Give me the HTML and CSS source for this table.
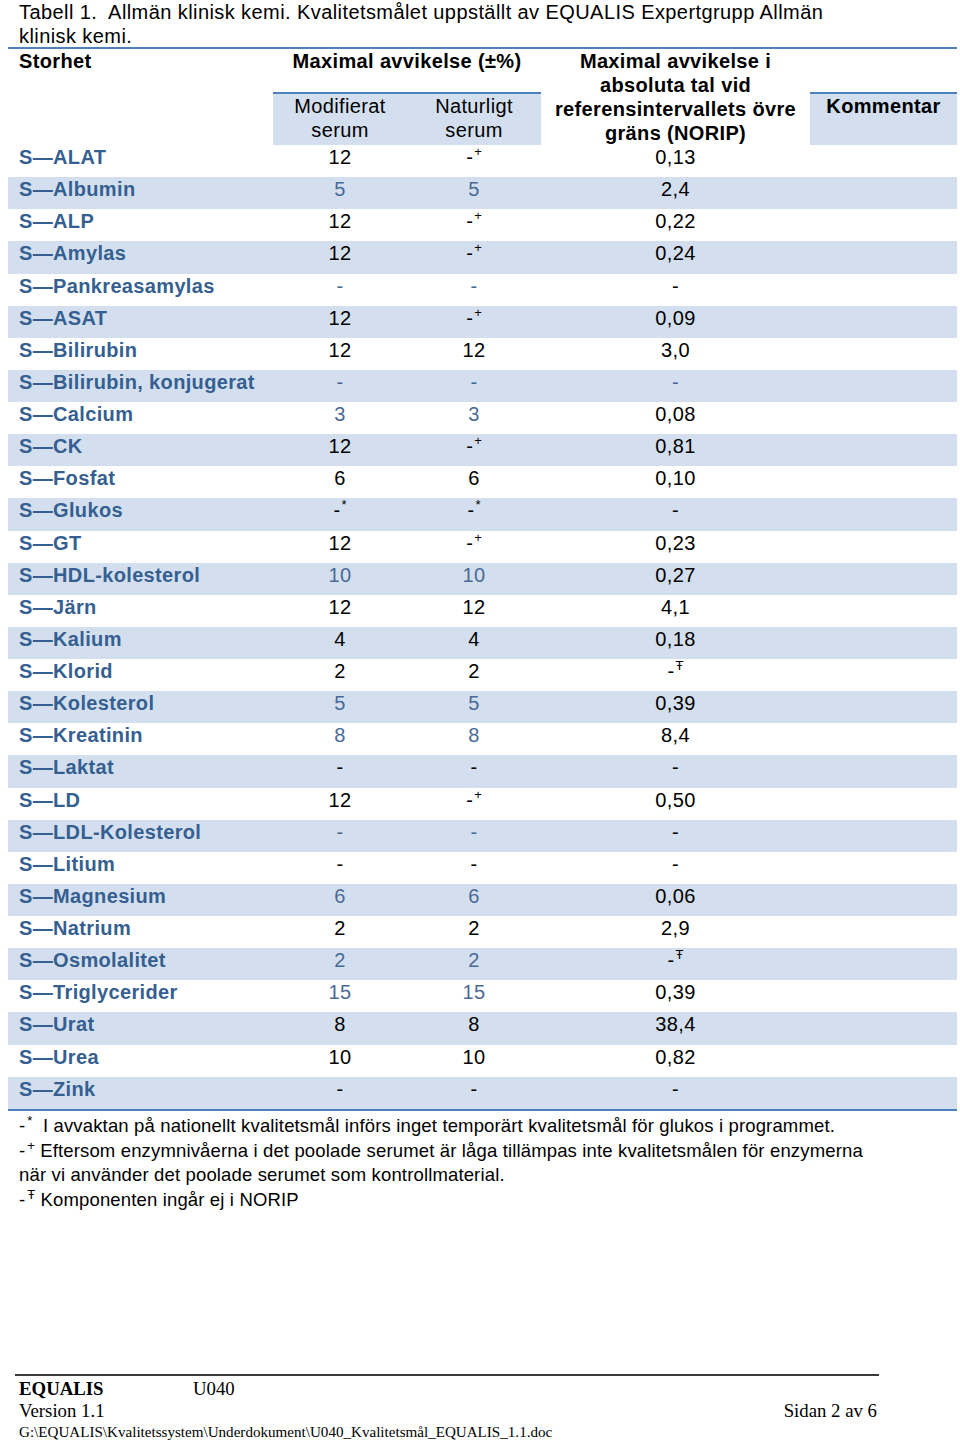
FILE: index.html
```html
<!DOCTYPE html>
<html lang="sv">
<head>
<meta charset="utf-8">
<title>Tabell 1. Allmän klinisk kemi</title>
<link rel="stylesheet" href="styles.css">
</head>
<body>
<div class="page">
  <p class="caption">Tabell 1.&nbsp; Allmän klinisk kemi. Kvalitetsmålet uppställt av EQUALIS Expertgrupp Allmän klinisk kemi.</p>
  <table class="goals">
    <colgroup>
      <col class="c-name"><col class="c-mod"><col class="c-nat"><col class="c-abs"><col class="c-com">
    </colgroup>
    <thead>
      <tr class="h1">
        <th class="th-name">Storhet</th>
        <th class="th-group" colspan="2">Maximal avvikelse (±%)</th>
        <th class="th-abs" rowspan="2">Maximal avvikelse i<br>absoluta tal vid<br>referensintervallets övre<br>gräns (NORIP)</th>
        <th class="th-empty"></th>
      </tr>
      <tr class="h2">
        <th class="th-empty"></th>
        <th class="th-sub">Modifierat<br>serum</th>
        <th class="th-sub">Naturligt<br>serum</th>
        <th class="th-com">Kommentar</th>
      </tr>
    </thead>
    <tbody>
      <tr><td class="name">S—ALAT</td><td>12</td><td>-<sup>+</sup></td><td>0,13</td><td></td></tr>
      <tr><td class="name">S—Albumin</td><td class="b">5</td><td class="b">5</td><td>2,4</td><td></td></tr>
      <tr><td class="name">S—ALP</td><td>12</td><td>-<sup>+</sup></td><td>0,22</td><td></td></tr>
      <tr><td class="name">S—Amylas</td><td>12</td><td>-<sup>+</sup></td><td>0,24</td><td></td></tr>
      <tr><td class="name">S—Pankreasamylas</td><td class="b">-</td><td class="b">-</td><td>-</td><td></td></tr>
      <tr><td class="name">S—ASAT</td><td>12</td><td>-<sup>+</sup></td><td>0,09</td><td></td></tr>
      <tr><td class="name">S—Bilirubin</td><td>12</td><td>12</td><td>3,0</td><td></td></tr>
      <tr><td class="name">S—Bilirubin, konjugerat</td><td class="b">-</td><td class="b">-</td><td class="b">-</td><td></td></tr>
      <tr><td class="name">S—Calcium</td><td class="b">3</td><td class="b">3</td><td>0,08</td><td></td></tr>
      <tr><td class="name">S—CK</td><td>12</td><td>-<sup>+</sup></td><td>0,81</td><td></td></tr>
      <tr><td class="name">S—Fosfat</td><td>6</td><td>6</td><td>0,10</td><td></td></tr>
      <tr><td class="name">S—Glukos</td><td>-<sup>*</sup></td><td>-<sup>*</sup></td><td>-</td><td></td></tr>
      <tr><td class="name">S—GT</td><td>12</td><td>-<sup>+</sup></td><td>0,23</td><td></td></tr>
      <tr><td class="name">S—HDL-kolesterol</td><td class="b">10</td><td class="b">10</td><td>0,27</td><td></td></tr>
      <tr><td class="name">S—Järn</td><td>12</td><td>12</td><td>4,1</td><td></td></tr>
      <tr><td class="name">S—Kalium</td><td>4</td><td>4</td><td>0,18</td><td></td></tr>
      <tr><td class="name">S—Klorid</td><td>2</td><td>2</td><td>-<sup>Ŧ</sup></td><td></td></tr>
      <tr><td class="name">S—Kolesterol</td><td class="b">5</td><td class="b">5</td><td>0,39</td><td></td></tr>
      <tr><td class="name">S—Kreatinin</td><td class="b">8</td><td class="b">8</td><td>8,4</td><td></td></tr>
      <tr><td class="name">S—Laktat</td><td>-</td><td>-</td><td>-</td><td></td></tr>
      <tr><td class="name">S—LD</td><td>12</td><td>-<sup>+</sup></td><td>0,50</td><td></td></tr>
      <tr><td class="name">S—LDL-Kolesterol</td><td class="b">-</td><td class="b">-</td><td>-</td><td></td></tr>
      <tr><td class="name">S—Litium</td><td>-</td><td>-</td><td>-</td><td></td></tr>
      <tr><td class="name">S—Magnesium</td><td class="b">6</td><td class="b">6</td><td>0,06</td><td></td></tr>
      <tr><td class="name">S—Natrium</td><td>2</td><td>2</td><td>2,9</td><td></td></tr>
      <tr><td class="name">S—Osmolalitet</td><td class="b">2</td><td class="b">2</td><td>-<sup>Ŧ</sup></td><td></td></tr>
      <tr><td class="name">S—Triglycerider</td><td class="b">15</td><td class="b">15</td><td>0,39</td><td></td></tr>
      <tr><td class="name">S—Urat</td><td>8</td><td>8</td><td>38,4</td><td></td></tr>
      <tr><td class="name">S—Urea</td><td>10</td><td>10</td><td>0,82</td><td></td></tr>
      <tr><td class="name">S—Zink</td><td>-</td><td>-</td><td>-</td><td></td></tr>
    </tbody>
  </table>
  <div class="notes">
    <p>-<sup>*</sup>&nbsp; I avvaktan på nationellt kvalitetsmål införs inget temporärt kvalitetsmål för glukos i programmet.</p>
    <p>-<sup>+</sup> Eftersom enzymnivåerna i det poolade serumet är låga tillämpas inte kvalitetsmålen för enzymerna<br>när vi använder det poolade serumet som kontrollmaterial.</p>
    <p>-<sup>Ŧ</sup> Komponenten ingår ej i NORIP</p>
  </div>
  <footer class="footer">
    <div class="f-row">
      <span class="f-org">EQUALIS</span>
      <span class="f-doc">U040</span>
    </div>
    <div class="f-row f-split">
      <span>Version 1.1</span>
      <span>Sidan 2 av 6</span>
    </div>
    <div class="f-path">G:\EQUALIS\Kvalitetssystem\Underdokument\U040_Kvalitetsmål_EQUALIS_1.1.doc</div>
  </footer>
</div>
</body>
</html>
```

FILE: styles.css
```css
html, body {
  margin: 0;
  padding: 0;
  background: #ffffff;
}

.page {
  width: 960px;
  height: 1442px;
  font-family: "Liberation Sans", Arial, sans-serif;
  color: #000000;
  overflow: hidden;
}

.caption {
  margin: 0;
  padding: 0 8px 0 19px;
  font-size: 20px;
  letter-spacing: 0.42px;
  line-height: 24px;
  height: 47px;
  width: 830px;
}

.goals {
  margin-left: 8px;
  width: 949px;
  table-layout: fixed;
  border-collapse: separate;
  border-spacing: 0;
  border-top: 2px solid #4f81bd;
  border-bottom: 2px solid #4f81bd;
  font-size: 20px;
  letter-spacing: 0.35px;
  line-height: 24px;
}

.c-name { width: 265px; }
.c-mod { width: 134px; }
.c-nat { width: 134px; }
.c-abs { width: 269px; }
.c-com { width: 147px; }

.goals th,
.goals td {
  padding: 0;
  vertical-align: top;
  text-align: center;
}

.goals th {
  font-weight: bold;
}

.h1 th {
  height: 43px;
}

.th-name {
  text-align: left !important;
  padding-left: 11px !important;
}

.h2 th {
  height: 51px;
}

.th-sub {
  font-weight: normal !important;
  background: #d3dfee;
  border-top: 2px solid #4f81bd;
}

.th-com {
  background: #d3dfee;
  border-top: 2px solid #4f81bd;
}

.goals tbody tr {
  height: 32.14px;
}

.goals tbody tr:nth-child(even) td {
  background: #d3dfee;
}

.goals tbody td.name {
  text-align: left;
  padding-left: 11px;
  font-weight: bold;
  color: #365f91;
}

.goals tbody td.b {
  color: #4a6a96;
}

sup {
  font-size: 13px;
  line-height: 0;
  vertical-align: 8px;
  margin-left: 1px;
  letter-spacing: 0;
}

.notes {
  padding: 3px 0 0 19px;
  width: 880px;
  font-size: 18.5px;
  letter-spacing: 0.15px;
  line-height: 24px;
}

.notes p {
  margin: 0 0 1px;
}

.notes sup {
  font-size: 13px;
  vertical-align: 7px;
  margin-left: 2px;
}

.footer {
  margin: 162px 0 0 15px;
  width: 864px;
  border-top: 2px solid #3a3a3a;
  padding: 2px 2px 0 4px;
  box-sizing: border-box;
  font-family: "Liberation Serif", "Times New Roman", serif;
  font-size: 18.8px;
  line-height: 22px;
}

.f-row {
  display: flex;
}

.f-org {
  font-weight: bold;
  width: 174px;
}

.f-split {
  justify-content: space-between;
}

.f-path {
  font-size: 15.1px;
  line-height: 20px;
}
```
